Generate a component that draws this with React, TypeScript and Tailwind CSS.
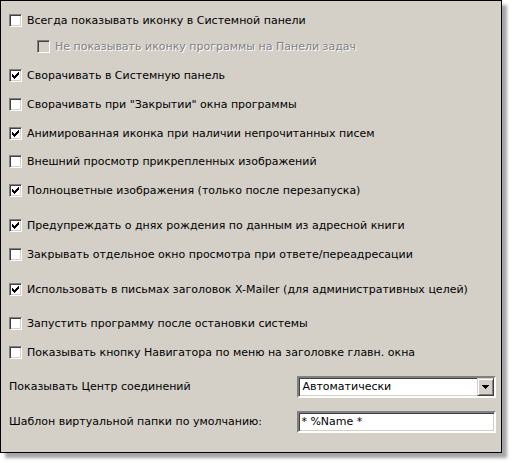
import React from 'react';

type Opt = { label: string; checked: boolean; mt: string; disabled?: boolean; indent?: boolean };

const OPTIONS: Opt[] = [
    { label: 'Всегда показывать иконку в Системной панели', checked: false, mt: 'mt-0' },
    { label: 'Не показывать иконку программы на Панели задач', checked: false, mt: 'mt-[13px]', disabled: true, indent: true },
    { label: 'Сворачивать в Системную панель', checked: true, mt: 'mt-[16px]' },
    { label: 'Сворачивать при "Закрытии" окна программы', checked: false, mt: 'mt-[16px]' },
    { label: 'Анимированная иконка при наличии непрочитанных писем', checked: true, mt: 'mt-[16px]' },
    { label: 'Внешний просмотр прикрепленных изображений', checked: false, mt: 'mt-[15px]' },
    { label: 'Полноцветные изображения (только после перезапуска)', checked: true, mt: 'mt-[16px]' },
    { label: 'Предупреждать о днях рождения по данным из адресной книги', checked: true, mt: 'mt-[22px]' },
    { label: 'Закрывать отдельное окно просмотра при ответе/переадресации', checked: false, mt: 'mt-[16px]' },
    { label: 'Использовать в письмах заголовок X-Mailer (для административных целей)', checked: true, mt: 'mt-[22px]' },
    { label: 'Запустить программу после остановки системы', checked: false, mt: 'mt-[21px]' },
    { label: 'Показывать кнопку Навигатора по меню на заголовке главн. окна', checked: false, mt: 'mt-[16px]' },
];

const CheckBox: React.FC<{ checked: boolean; disabled?: boolean }> = ({ checked, disabled }) => (
    <div
        className={`w-[13px] h-[13px] shrink-0 border border-t-[#808080] border-l-[#808080] border-b-white border-r-white shadow-[inset_1px_1px_0_#404040,inset_-1px_-1px_0_#d4d0c8] flex items-center justify-center ${disabled ? 'bg-[#d4d0c8]' : 'bg-white'}`}
    >
        {checked && (
            <svg width="7" height="7" viewBox="0 0 7 7" shapeRendering="crispEdges">
                <polygon points="0,2 2,4 7,-1 7,2 2,7 0,5" fill="#000" />
            </svg>
        )}
    </div>
);

const App: React.FC = () => {
    return (
        <div className="w-[513px] h-[463px] bg-white font-['DejaVu_Sans',sans-serif] text-[11px] text-black">
            <div className="w-[502px] h-[453px] bg-[#d4d0c8] border border-black shadow-[5px_5px_3px_rgba(0,0,0,0.35)] pt-[13px] pl-[8px] pr-[5px] flex flex-col">
                {OPTIONS.map((o, i) => (
                    <div key={i} className={`${o.mt} h-[13px] flex items-center gap-[5px] ${o.indent ? 'ml-[28px]' : ''}`}>
                        <CheckBox checked={o.checked} disabled={o.disabled} />
                        <span
                            className={`leading-[13px] whitespace-nowrap ${o.disabled ? 'text-[#808080] [text-shadow:1px_1px_0_#fff]' : ''}`}
                        >
                            {o.label}
                        </span>
                    </div>
                ))}

                <div className="mt-[17px] h-[22px] flex items-center">
                    <span className="w-[289px] whitespace-nowrap">Показывать Центр соединений</span>
                    <div className="w-[199px] h-[22px] bg-white border-2 border-t-[#808080] border-l-[#808080] border-b-white border-r-white shadow-[inset_1px_1px_0_#404040,inset_-1px_-1px_0_#d4d0c8] flex items-stretch pl-[2px]">
                        <span className="flex-1 pl-[1px] whitespace-nowrap self-center">Автоматически</span>
                        <div className="w-[17px] h-[18px] bg-[#d4d0c8] border border-t-[#d4d0c8] border-l-[#d4d0c8] border-b-[#404040] border-r-[#404040] shadow-[inset_1px_1px_0_#fff,inset_-1px_-1px_0_#808080] flex items-center justify-center">
                            <svg width="7" height="4" viewBox="0 0 7 4" shapeRendering="crispEdges">
                                <polygon points="0,0 7,0 3.5,4" fill="#000" />
                            </svg>
                        </div>
                    </div>
                </div>

                <div className="mt-[13px] h-[22px] flex items-center">
                    <span className="w-[289px] whitespace-nowrap">Шаблон виртуальной папки по умолчанию:</span>
                    <div className="w-[199px] h-[22px] bg-white border-2 border-t-[#808080] border-l-[#808080] border-b-white border-r-white shadow-[inset_1px_1px_0_#404040,inset_-1px_-1px_0_#d4d0c8] flex items-center px-[2px]">
                        <span className="whitespace-nowrap">* %Name *</span>
                    </div>
                </div>
            </div>
        </div>
    );
};

export default App;
